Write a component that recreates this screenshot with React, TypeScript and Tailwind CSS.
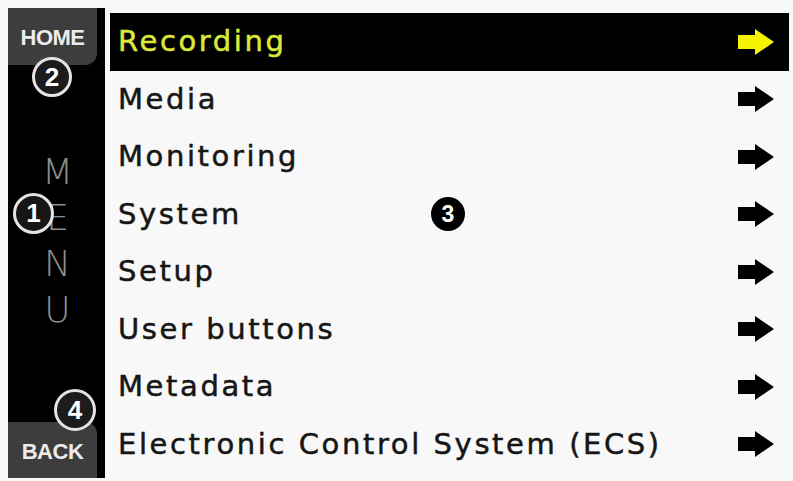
import { ReactNode } from "react";

const items = [
  "Recording",
  "Media",
  "Monitoring",
  "System",
  "Setup",
  "User buttons",
  "Metadata",
  "Electronic Control System (ECS)",
];

function Arrow({ color }: { color: string }) {
  return (
    <svg width="36" height="26" viewBox="0 0 36 26">
      <polygon points="0,6 17,6 17,0 36,13 17,26 17,20 0,20" fill={color} />
    </svg>
  );
}

function Callout({ children, className }: { children: ReactNode; className: string }) {
  return (
    <div
      className={`absolute flex items-center justify-center rounded-full border-[3px] border-[#e4e4e4] bg-[#1c1c1c] text-[26px] font-bold text-white ${className}`}
      style={{ fontFamily: '"Liberation Sans", Arial, sans-serif' }}
    >
      {children}
    </div>
  );
}

export default function App() {
  return (
    <div
      className="relative flex h-[481px] w-[793px] gap-[5px] bg-[#f8f8f8] pl-[8px] pt-[8px]"
      style={{ fontFamily: '"DejaVu Sans", sans-serif' }}
    >
      {/* side bar */}
      <div className="relative flex h-[470px] w-[97px] flex-col bg-black pr-[8px]">
        <div
          className="flex h-[57px] items-start justify-center rounded-br-[12px] bg-[#3d3d3d] pt-[19px] text-[22px] font-bold leading-none tracking-[-0.5px] text-[#ececec]"
          style={{ fontFamily: '"Liberation Sans", Arial, sans-serif' }}
        >
          HOME
        </div>
        <div className="mt-[84px] flex flex-col items-center pl-[10px] text-[36px] font-light leading-[46px] text-[#8e8e8e]">
          <span>M</span>
          <span>E</span>
          <span>N</span>
          <span>U</span>
        </div>
        <div
          className="mt-auto flex h-[56px] items-start justify-center rounded-tr-[12px] bg-[#3d3d3d] pt-[19px] text-[22px] font-bold leading-none tracking-[-0.5px] text-[#ececec]"
          style={{ fontFamily: '"Liberation Sans", Arial, sans-serif' }}
        >
          BACK
        </div>
        <Callout className="left-[24px] top-[49px] h-[40px] w-[40px]">2</Callout>
        <Callout className="left-[5px] top-[185px] h-[41px] w-[41px] bg-[#1c1c1c]/80">1</Callout>
        <Callout className="left-[46px] top-[381px] h-[42px] w-[42px]">4</Callout>
      </div>

      {/* menu list */}
      <div className="relative mt-[5px] flex h-[460px] w-[679px] flex-col">
        {items.map((label, i) => {
          const active = i === 0;
          return (
            <div
              key={label}
              className={`flex h-[57.5px] items-center justify-between pl-[8px] pr-[15px] ${active ? "bg-black" : ""}`}
            >
              <span
                className={`text-[29px] leading-none tracking-[2.6px] [-webkit-text-stroke:0.5px_currentColor] ${active ? "text-[#dce83a]" : "text-[#161616]"}`}
              >
                {label}
              </span>
              <Arrow color={active ? "#f4f400" : "#000000"} />
            </div>
          );
        })}
        <div
          className="absolute left-[321px] top-[184px] flex h-[34px] w-[34px] items-center justify-center rounded-full bg-black text-[23px] font-bold text-white"
          style={{ fontFamily: '"Liberation Sans", Arial, sans-serif' }}
        >
          3
        </div>
      </div>
    </div>
  );
}
